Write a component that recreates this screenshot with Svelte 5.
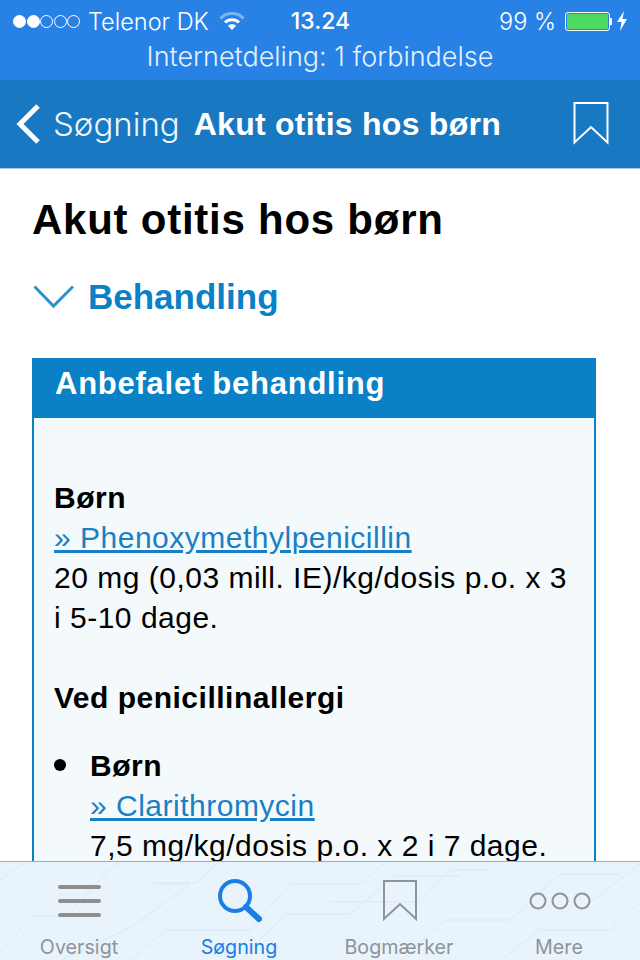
<script>
  const dots = [true, true, false, false, false];
  const tabs = [
    { label: 'Oversigt', icon: 'menu' },
    { label: 'Søgning', icon: 'search', active: true },
    { label: 'Bogmærker', icon: 'bookmark' },
    { label: 'Mere', icon: 'more' }
  ];
  // faint circuit pattern behind the tab bar
  const traces = [
    'M0 18 L22 2',
    'M0 89 L33 54 L67 54 L105 12 L130 -10',
    'M60 99 L130 66 L190 22 L155 22',
    'M130 99 L165 68 L250 68 L290 22 L360 22 L395 -8',
    'M150 21 L196 21 L230 -10',
    'M240 99 L285 52 L350 52 L395 14 L460 14',
    'M330 40 L420 40 L450 8 L490 8',
    'M400 99 L445 58 L510 58 L560 12 L620 12',
    'M500 99 L540 68 L610 68 L640 40',
    'M590 40 L640 2'
  ];
</script>

<div class="screen">
  <header class="status">
    <div class="status-row">
      <div class="carrier">
        <span class="dots">
          {#each dots as on}
            <i class:on></i>
          {/each}
        </span>
        <span class="carrier-name">Telenor DK</span>
        <svg class="wifi" width="26" height="20" viewBox="0 0 26 20">
          <path d="M1.5 7.5 A16 16 0 0 1 24.5 7.5" fill="none" stroke="#fff" stroke-opacity=".4" stroke-width="3" />
          <path d="M6 11.5 A10 10 0 0 1 20 11.5" fill="none" stroke="#fff" stroke-width="3" />
          <path d="M13 19 L8.8 14.6 A6 6 0 0 1 17.2 14.6 Z" fill="#fff" />
        </svg>
      </div>
      <span class="time">13.24</span>
      <div class="battery-wrap">
        <span class="percent">99 %</span>
        <span class="battery"><span class="fill"></span></span>
        <span class="nub"></span>
        <svg width="12" height="20" viewBox="0 0 12 20" class="bolt">
          <path d="M8 0 L1 11 H5.5 L4 20 L11 8 H6.5 Z" fill="#fff" />
        </svg>
      </div>
    </div>
    <div class="hotspot">Internetdeling: 1 forbindelse</div>
  </header>

  <nav class="navbar">
    <svg class="back" width="26" height="42" viewBox="0 0 26 42">
      <path d="M23 3 L5 21 L23 39" fill="none" stroke="#fff" stroke-width="5" />
    </svg>
    <span class="back-label">Søgning</span>
    <span class="nav-title">Akut otitis hos børn</span>
    <svg class="nav-mark" width="36" height="44" viewBox="0 0 36 44">
      <path d="M1.5 1 H34.5 V40.5 L18 25 L1.5 40.5 Z" fill="none" stroke="#fff" stroke-width="2" />
    </svg>
  </nav>

  <main class="content">
    <h1>Akut otitis hos børn</h1>
    <div class="section">
      <svg width="42" height="26" viewBox="0 0 42 26">
        <path d="M2.5 2.5 L21.5 22 L41 2.5" fill="none" stroke="#2a93cc" stroke-width="3" />
      </svg>
      <h2>Behandling</h2>
    </div>

    <section class="box">
      <h3>Anbefalet behandling</h3>
      <div class="box-body">
        <p>
          <b>Børn</b><br />
          <a href="#top">» Phenoxymethylpenicillin</a><br />
          20 mg (0,03 mill. IE)/kg/dosis p.o. x 3 i 5-10 dage.
        </p>
        <p class="lead"><b>Ved penicillinallergi</b></p>
        <ul>
          <li>
            <b>Børn</b><br />
            <a href="#top">» Clarithromycin</a><br />
            7,5 mg/kg/dosis p.o. x 2 i 7 dage.
          </li>
        </ul>
      </div>
    </section>
  </main>

  <footer class="tabbar">
    <svg class="traces" width="640" height="99" viewBox="0 0 640 99">
      {#each traces as d}
        <path {d} fill="none" stroke="#d6eaf6" stroke-width="1" />
      {/each}
    </svg>
    {#each tabs as tab}
      <div class="tab" class:active={tab.active}>
        <div class="tab-icon">
          {#if tab.icon === 'menu'}
            <svg width="44" height="34" viewBox="0 0 44 34">
              <path d="M2 3 H41 M2 17 H41 M2 31 H41" stroke="#8e8e8e" stroke-width="4" stroke-linecap="round" />
            </svg>
          {:else if tab.icon === 'search'}
            <svg width="46" height="46" viewBox="0 0 46 46">
              <circle cx="18" cy="18" r="15" fill="none" stroke="#1a7ee6" stroke-width="4" />
              <path d="M29 29 L42 41" stroke="#1a7ee6" stroke-width="6" stroke-linecap="round" />
            </svg>
          {:else if tab.icon === 'bookmark'}
            <svg width="36" height="44" viewBox="0 0 36 44">
              <path d="M2 2 H34 V40 L18 25 L2 40 Z" fill="none" stroke="#8e9499" stroke-width="2" />
            </svg>
          {:else}
            <svg width="64" height="20" viewBox="0 0 64 20">
              <circle cx="10" cy="10" r="7.5" fill="none" stroke="#8e9499" stroke-width="2" />
              <circle cx="32" cy="10" r="7.5" fill="none" stroke="#8e9499" stroke-width="2" />
              <circle cx="54" cy="10" r="7.5" fill="none" stroke="#8e9499" stroke-width="2" />
            </svg>
          {/if}
        </div>
        <span class="tab-label">{tab.label}</span>
      </div>
    {/each}
  </footer>
</div>

<style>
  :global(body) {
    margin: 0;
    font-family: "Liberation Sans", Arial, sans-serif;
  }

  .screen {
    width: 640px;
    height: 960px;
    display: flex;
    flex-direction: column;
    overflow: hidden;
    background: #fff;
  }

  .status {
    height: 80px;
    flex: none;
    background: #2882e6;
    color: #fff;
    font-family: Inter, "Liberation Sans", sans-serif;
    font-weight: 300;
  }

  .status-row {
    height: 42px;
    display: grid;
    grid-template-columns: 1fr auto 1fr;
    align-items: center;
    padding: 0 12px 0 13px;
    font-size: 23.5px;
  }

  .carrier {
    display: flex;
    align-items: center;
  }

  .dots {
    display: flex;
    gap: 0.5px;
    margin-right: 8px;
  }

  .dots i {
    width: 13px;
    height: 13px;
    border: 1px solid #fff;
    border-radius: 50%;
    box-sizing: border-box;
  }

  .dots i.on {
    background: #fff;
  }

  .wifi {
    margin-left: 10px;
  }

  .time {
    font-size: 23px;
    font-weight: 500;
  }

  .battery-wrap {
    display: flex;
    align-items: center;
    justify-content: flex-end;
  }

  .percent {
    margin-right: 9px;
  }

  .battery {
    width: 45px;
    height: 19px;
    border: 1px solid #fff;
    border-radius: 3px;
    padding: 1px;
    box-sizing: border-box;
    display: flex;
  }

  .fill {
    flex: 1;
    background: #4cd964;
    border-radius: 1px;
  }

  .nub {
    width: 2px;
    height: 7px;
    background: #fff;
    margin-right: 4px;
  }

  .hotspot {
    text-align: center;
    font-size: 27px;
    line-height: 30px;
    color: #e4f0fc;
  }

  .navbar {
    height: 89px;
    flex: none;
    box-sizing: border-box;
    background: #1879c2;
    border-bottom: 1px solid #a9c6dc;
    color: #fff;
    display: flex;
    align-items: center;
    padding-left: 15px;
    font-size: 32px;
  }

  .back-label {
    margin-left: 12px;
    font-family: Inter, "Liberation Sans", sans-serif;
    font-size: 33px;
    font-weight: 300;
    color: #eef6fc;
  }

  .nav-title {
    margin-left: 14px;
    font-weight: 700;
    flex: 1;
    letter-spacing: 0.25px;
  }

  .nav-mark {
    margin-right: 31px;
  }

  .content {
    flex: 1;
    min-height: 0;
    overflow: hidden;
    padding: 0 44px 0 32px;
    color: #000;
  }

  h1 {
    margin: 28px -20px 0 0;
    font-size: 42px;
    line-height: 46px;
    font-weight: 700;
    letter-spacing: 0.75px;
  }

  .section {
    display: flex;
    align-items: center;
    gap: 14px;
    margin-top: 34px;
  }

  h2 {
    margin: 0;
    font-size: 35px;
    line-height: 40px;
    font-weight: 700;
    color: #0a80c6;
  }

  .box {
    margin-top: 41px;
    border: 2px solid #0a80c6;
    background: #f4f9fc;
  }

  h3 {
    margin: 0;
    background: #0a80c6;
    color: #fff;
    font-size: 31px;
    line-height: 48px;
    height: 58px;
    padding-left: 21px;
    letter-spacing: 0.75px;
  }

  .box-body {
    padding: 60px 21px 40px 20px;
    font-size: 30px;
    line-height: 40px;
    letter-spacing: 0.5px;
  }

  p {
    margin: 0;
  }

  .lead {
    margin-top: 40px;
  }

  a {
    color: #1a80c4;
  }

  ul {
    margin: 28px 0 0;
    padding-left: 36px;
    list-style: none;
  }

  li {
    position: relative;
  }

  li::before {
    content: "";
    position: absolute;
    left: -36px;
    top: 13px;
    width: 12px;
    height: 12px;
    border-radius: 50%;
    background: #000;
  }

  .tabbar {
    position: relative;
    height: 99px;
    flex: none;
    box-sizing: border-box;
    border-top: 1px solid #a4acb3;
    background: #e8f3fb;
    display: grid;
    grid-template-columns: repeat(4, 1fr);
    overflow: hidden;
  }

  .traces {
    position: absolute;
    left: 0;
    top: 0;
  }

  .tab {
    position: relative;
    display: flex;
    flex-direction: column;
    align-items: center;
    color: #8e9499;
  }

  .tab.active {
    color: #1a7ee6;
  }

  .tab-icon {
    height: 73px;
    padding-top: 4px;
    box-sizing: border-box;
    display: flex;
    align-items: center;
    justify-content: center;
  }

  .tab-label {
    font-family: Inter, "Liberation Sans", sans-serif;
    font-size: 19.7px;
    line-height: 24px;
    margin-left: -2px;
  }
</style>
